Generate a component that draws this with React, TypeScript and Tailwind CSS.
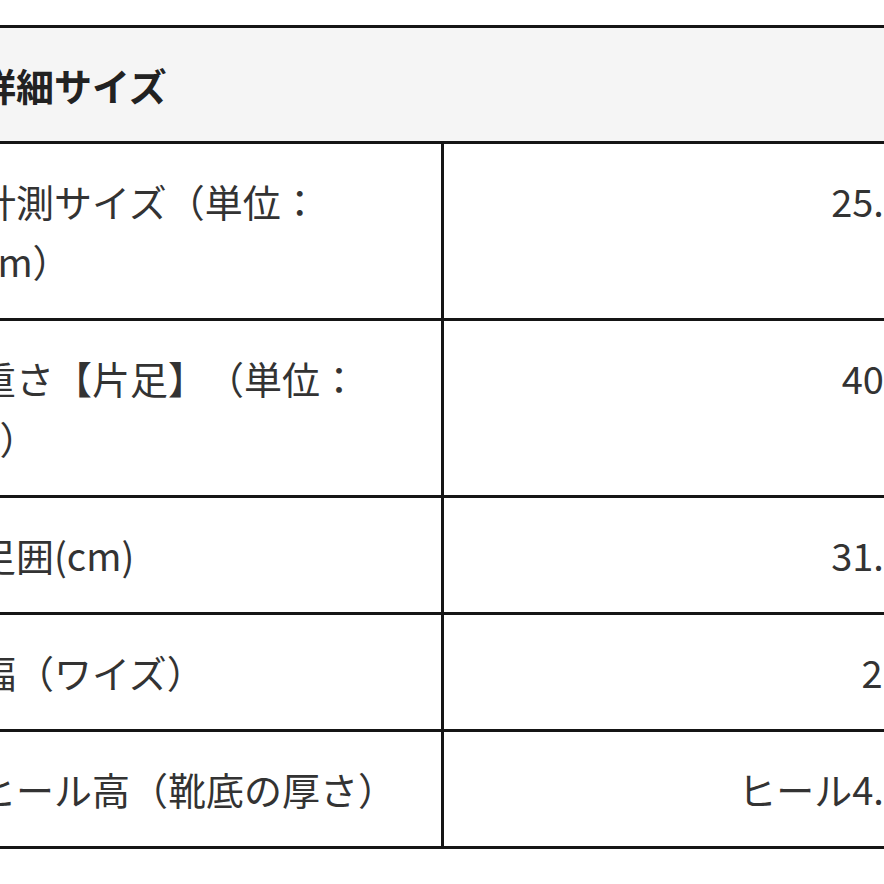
import React from "react";

const rows: { label: string; value: string }[] = [
  { label: "計測サイズ（単位：cm）", value: "25.0" },
  { label: "重さ【片足】（単位：g）", value: "400" },
  { label: "足囲(cm)", value: "31.0" },
  { label: "幅（ワイズ）", value: "2E" },
  { label: "ヒール高（靴底の厚さ）", value: "ヒール4.0" },
];

export default function App() {
  return (
    <div
      className="w-[884px] h-[884px] overflow-hidden bg-white text-[#333] [text-spacing-trim:space-all]"
      style={{ fontFamily: '"Noto Sans CJK JP", "Noto Sans", sans-serif' }}
    >
      <div className="ml-[-50px] mt-[25px] w-[986px] border-t-[3px] border-r-[3px] border-[#151515] text-[38px] leading-[60px]">
        <div className="bg-[#f5f5f5] pl-[28px] pt-[27px] pb-[26px] font-bold text-[#222] border-b-[3px] border-[#151515]">
          詳細サイズ
        </div>
        {rows.map((r, i) => (
          <div
            key={i}
            className="grid grid-cols-[494px_1fr] border-b-[3px] border-[#151515]"
          >
            <div className="border-r-[3px] border-[#151515] pl-[28px] pr-[39px] py-[27px]">
              {r.label}
            </div>
            <div className="pr-[28px] py-[27px] text-right whitespace-nowrap">
              {r.value}
            </div>
          </div>
        ))}
      </div>
    </div>
  );
}
